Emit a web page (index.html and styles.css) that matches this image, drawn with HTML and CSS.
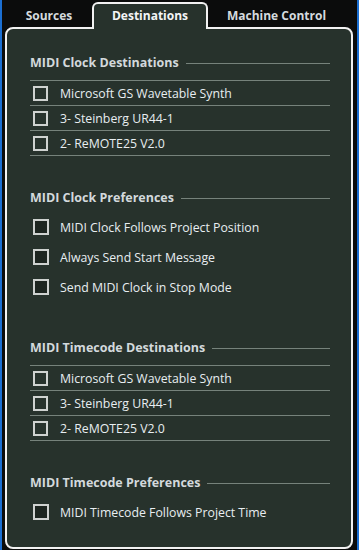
FILE: index.html
```html
<!DOCTYPE html>
<html lang="en">
<head>
    <meta charset="UTF-8">
    <title>MIDI Sync Settings</title>
    <link rel="stylesheet" href="styles.css">
</head>
<body>
    <div class="window">
        <div class="tabs">
            <div class="tab">Sources</div>
            <div class="tab active">Destinations</div>
            <div class="tab">Machine Control</div>
        </div>
        <div class="panel">
            <div class="heading"><span>MIDI Clock Destinations</span><i></i></div>
            <div class="list">
                <div class="row"><span class="box"></span>Microsoft GS Wavetable Synth</div>
                <div class="row"><span class="box"></span>3- Steinberg UR44-1</div>
                <div class="row"><span class="box"></span>2- ReMOTE25 V2.0</div>
            </div>

            <div class="heading"><span>MIDI Clock Preferences</span><i></i></div>
            <div class="prefs">
                <div class="pref"><span class="box dark"></span>MIDI Clock Follows Project Position</div>
                <div class="pref"><span class="box dark"></span>Always Send Start Message</div>
                <div class="pref"><span class="box dark"></span>Send MIDI Clock in Stop Mode</div>
            </div>

            <div class="heading"><span>MIDI Timecode Destinations</span><i></i></div>
            <div class="list">
                <div class="row"><span class="box"></span>Microsoft GS Wavetable Synth</div>
                <div class="row"><span class="box"></span>3- Steinberg UR44-1</div>
                <div class="row"><span class="box"></span>2- ReMOTE25 V2.0</div>
            </div>

            <div class="heading"><span>MIDI Timecode Preferences</span><i></i></div>
            <div class="prefs">
                <div class="pref"><span class="box dark"></span>MIDI Timecode Follows Project Time</div>
            </div>
        </div>
    </div>
</body>
</html>
```

FILE: styles.css
```css
html, body {
    margin: 0;
    padding: 0;
    background: #0b0c0c;
}
body {
    font-family: "Open Sans", "Noto Sans", sans-serif;
    font-size: 12.3px;
    color: #e8eef1;
}
.window {
    box-sizing: border-box;
    width: 359px;
    height: 550px;
    border-left: 2px solid #1b6fd2;
    border-right: 2px solid #1b6fd2;
    display: flex;
    flex-direction: column;
}
.tabs {
    display: flex;
    height: 27px;
    flex-shrink: 0;
    align-items: flex-end;
}
.tab {
    box-sizing: border-box;
    height: 27px;
    line-height: 31px;
    text-align: center;
    font-weight: 700;
    font-size: 12px;
    color: #d4dade;
}
.tab:nth-child(1) {
    width: 90px;
    padding-left: 4px;
}
.tab:nth-child(3) {
    width: 137px;
}
.tab.active {
    box-sizing: content-box;
    width: 112px;
    height: 23px;
    line-height: 23px;
    padding-bottom: 2px;
    margin-bottom: -2px;
    position: relative;
    z-index: 1;
    background: #27322c;
    border: 2px solid #f2f2f2;
    border-bottom: none;
    border-radius: 6px 6px 0 0;
    color: #f4f6f7;
}
.panel {
    flex: 1;
    min-height: 0;
    margin: 0 4px 1px 3px;
    background: #27322c;
    border: 2px solid #f2f2f2;
    border-radius: 8px;
    padding: 23px 21px 0 23px;
}
.heading {
    display: flex;
    align-items: center;
    height: 20px;
    font-weight: 700;
    font-size: 12.5px;
    color: #d3d9dc;
}
.heading i {
    flex: 1;
    height: 1px;
    margin: 2px 0 0 7px;
    background: #76827b;
}
.list {
    margin: 8px 0 31px;
    border-top: 1px solid #76827b;
}
.row {
    display: flex;
    align-items: center;
    height: 24px;
    border-bottom: 1px solid #76827b;
}
.box {
    box-sizing: border-box;
    width: 15px;
    height: 15px;
    margin: 0 12px 0 3px;
    border: 2px solid #cfd2d0;
}
.box.dark {
    width: 16px;
    height: 16px;
    margin-right: 11px;
    background: #1d2520;
}
.prefs {
    margin: 5px 0 35px;
}
.prefs:last-child {
    margin-bottom: 0;
}
.pref {
    display: flex;
    align-items: center;
    height: 30px;
}
```
